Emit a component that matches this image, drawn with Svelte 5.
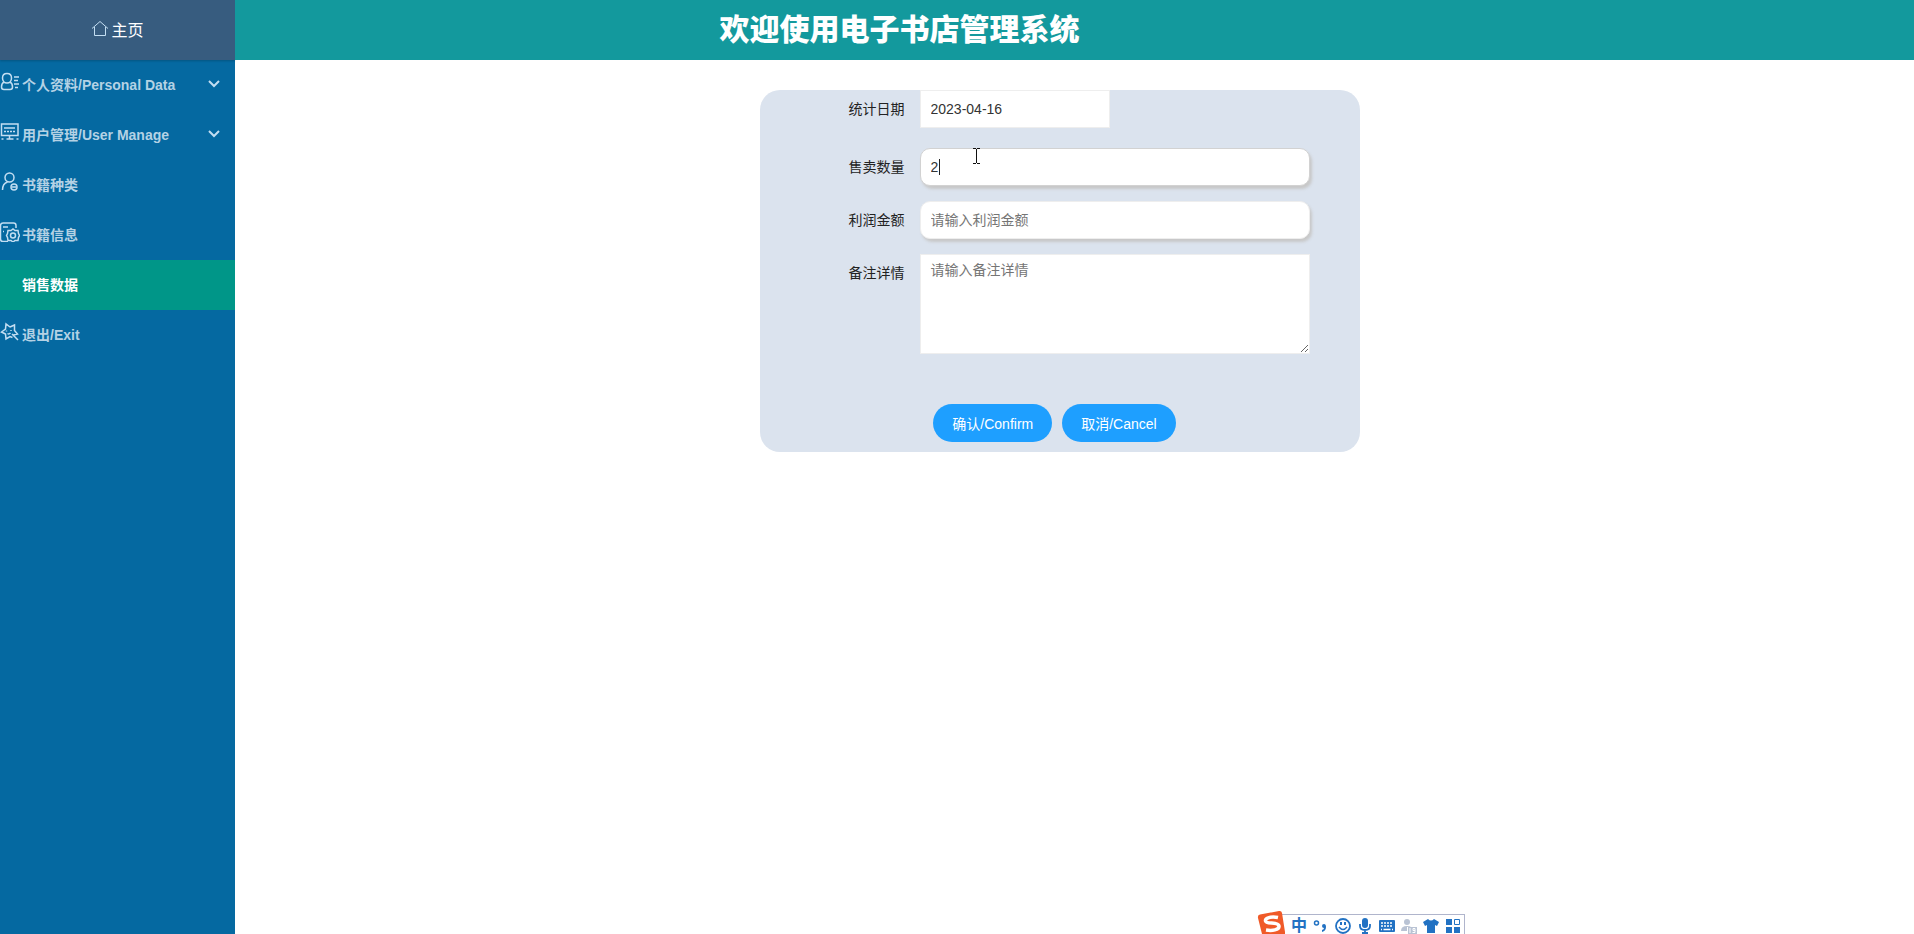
<script lang="ts">
	import { onMount } from 'svelte';

	type MenuItem = { label: string; icon: string; expandable?: boolean; active?: boolean };

	const menu: MenuItem[] = [
		{ label: '个人资料/Personal Data', icon: 'profile', expandable: true },
		{ label: '用户管理/User Manage', icon: 'screen', expandable: true },
		{ label: '书籍种类', icon: 'person' },
		{ label: '书籍信息', icon: 'settings' },
		{ label: '销售数据', icon: '', active: true },
		{ label: '退出/Exit', icon: 'star' }
	];

	let date = $state('2023-04-16');
	let quantity = $state('2');
	let profit = $state('');
	let remark = $state('');
	let quantityInput: HTMLInputElement;

	onMount(() => quantityInput.focus());

	function reset() {
		quantity = '';
		profit = '';
		remark = '';
	}
</script>

<div class="layout">
	<aside class="sidebar">
		<a class="home" href="#home">
			<svg class="home-icon" viewBox="0 0 18 18" aria-hidden="true">
				<path d="M1 8.500 9 1.500l8 7M3.500 7v8.500h11V7" />
			</svg>
			<span>主页</span>
		</a>
		<nav>
			{#each menu as item}
				<a class="item" class:active={item.active} href="#menu">
					<svg class="icon" viewBox="0 0 20 20" aria-hidden="true">
						{#if item.icon === 'profile'}
							<path d="M7 1.500c3 0 4.500 2 4.500 4.500S10 11 7 11 2.500 8.500 2.500 6 4 1.500 7 1.500z" />
							<path d="M4 10c-2 1-2.500 3-2.500 5 0 2 1 2.500 2.500 2.500h6c1.500 0 2.500-.5 2.500-2.500s-.5-4-2.500-5M14 5h5M14 8.500h4M14 12h5M15 15.500h3" />
						{:else if item.icon === 'screen'}
							<path d="M1.500 2h16.500v11.500h-16.500zM9.500 13.500v3.500M6.500 17h7" />
							<path d="M4 6h11M4 9.500h2M7 9.500h2M10 9.500h2M13 9.500h2M1.500 17h2M16.500 17h2" />
						{:else if item.icon === 'person'}
							<circle cx="9.5" cy="5.5" r="4.5" />
							<path d="M2.500 18c0-4 2-7 5-8" />
							<circle cx="14" cy="15" r="3" />
							<path d="M13 14v2M15 14v2" />
						{:else if item.icon === 'settings'}
							<path d="M16 6V3.500q0-2.500-2.500-2.500H3Q.5 1 .5 3.500V17q0 2.500 2.500 2.500h5M3 5h5M3 9.500h1" />
							<path d="m11 8.500 2-1.500 2 1.500h3l.5 3 1 2-1 2-.5 3h-3L13 20l-2-1.500H8l-.5-3-1-2 1-2 .5-3z" />
							<circle cx="13" cy="13.5" r="2.5" />
						{:else if item.icon === 'star'}
							<path d="M10 5 14.500 3v5.500l3 3.500-4 1M10 5 6 2 5.500 7 1.500 10l4 2 .5 5 4-2.500 2.500 1M12 12l6 6" />
							<path d="M6.500 8.500v1M11 8v1M7.500 11.500q1.500 1 3-.5" />
						{/if}
					</svg>
					<span class="item-label">{item.label}</span>
					{#if item.expandable}
						<svg class="chevron" viewBox="0 0 12 8" aria-hidden="true">
							<path d="m1 1 5 5 5-5" />
						</svg>
					{/if}
				</a>
			{/each}
		</nav>
	</aside>

	<div class="body">
		<header class="header">
			<h1>欢迎使用电子书店管理系统</h1>
		</header>
		<main class="main">
			<form class="panel" onsubmit={(e) => e.preventDefault()}>
				<div class="row row-date">
					<label for="date">统计日期</label>
					<input id="date" class="field short" type="text" bind:value={date} />
				</div>
				<div class="row">
					<label for="quantity">售卖数量</label>
					<div class="control">
						<input
							id="quantity"
							class="field raised"
							type="text"
							placeholder="请输入售卖数量"
							bind:value={quantity}
							bind:this={quantityInput}
						/>
						<span class="caret"></span>
						<svg class="pointer" viewBox="0 0 7 16" aria-hidden="true">
							<path d="M0 .5h3M4 .5h3M3.500 1v14M0 15.500h3M4 15.500h3" />
						</svg>
					</div>
				</div>
				<div class="row">
					<label for="profit">利润金额</label>
					<input id="profit" class="field raised" type="text" placeholder="请输入利润金额" bind:value={profit} />
				</div>
				<div class="row">
					<label for="remark">备注详情</label>
					<textarea id="remark" class="field" placeholder="请输入备注详情" bind:value={remark}></textarea>
				</div>
				<div class="buttons">
					<button type="submit">确认/Confirm</button>
					<button type="button" onclick={reset}>取消/Cancel</button>
				</div>
			</form>
		</main>
	</div>

	<div class="ime">
		<svg class="ime-logo" viewBox="0 0 28 24" aria-hidden="true">
			<path d="M3 4.500 22 1q2.500-.5 3 2L28 22v2H5L1 8q-.5-3 2-3.500z" fill="#f05a28" />
			<path d="M21 7.500C14 6 8 8 8.500 11c.5 3.500 13 .5 13.500 5 .5 4-7 5-13 4" fill="none" stroke="#fff" stroke-width="3.500" />
		</svg>
		<span class="ime-mode">中</span>
		<svg viewBox="0 0 16 16" aria-hidden="true">
			<circle cx="3.5" cy="5" r="2" fill="none" stroke="#2272c3" stroke-width="1.500" />
			<path d="M9 8q0-2 2-2t2 3q0 4-4 5v-2q2-.5 2-2-2 0-2-2z" />
		</svg>
		<svg viewBox="0 0 16 16" aria-hidden="true">
			<circle cx="8" cy="8" r="7" fill="none" stroke="#2272c3" stroke-width="1.800" />
			<path d="M5 4h2v3H5zM9 4h2v3H9z" />
			<path d="M4 9q4 5 8 0" fill="none" stroke="#2272c3" stroke-width="1.500" />
		</svg>
		<svg viewBox="0 0 16 16" aria-hidden="true">
			<rect x="5" y="0" width="6" height="10" rx="3" />
			<path d="M3 6v2q0 4 5 4t5-4V6M8 12v3M5 15h6" fill="none" stroke="#2272c3" stroke-width="1.800" />
		</svg>
		<svg viewBox="0 0 16 16" aria-hidden="true">
			<rect x="0" y="2" width="16" height="12" rx="1" />
			<path d="M2 5h12M2 8h12" stroke="#fff" stroke-width="1.500" stroke-dasharray="2 1" />
			<path d="M2 11.500h1M4.500 11.500h7M13 11.500h1" stroke="#fff" stroke-width="1.500" />
		</svg>
		<svg viewBox="0 0 16 16" aria-hidden="true">
			<g fill="#b9c3d4">
				<circle cx="6" cy="4" r="3" />
				<path d="M0 13q0-5 6-5 3 0 4 1H6v4zM7 9h9v7H7z" />
			</g>
			<path d="M9 10v5M14 12.500h-2v-2h2v4h-2.500" fill="none" stroke="#fff" />
		</svg>
		<svg viewBox="0 0 16 16" aria-hidden="true">
			<path d="M5 1q3 3 6 0l5 3-2 4-2-1v8H4V7L2 8 0 4z" />
		</svg>
		<svg viewBox="0 0 16 16" aria-hidden="true">
			<path d="M1 1h6v6H1zM1 9h6v6H1zM9 9h6v6H9z" />
			<path d="M9.500 1.500h5v5h-5z" fill="none" stroke="#2272c3" />
		</svg>
	</div>
</div>

<style>
	:global(body) {
		margin: 0;
		font-family: 'Liberation Sans', 'Noto Sans CJK SC', sans-serif;
		font-size: 14px;
		color: #222;
	}

	.layout {
		position: relative;
		display: flex;
		min-height: 100vh;
		overflow: hidden;
	}

	.sidebar {
		flex: none;
		width: 235px;
		background: #0569a1;
	}

	.home {
		display: flex;
		align-items: center;
		justify-content: center;
		gap: 2px;
		box-sizing: border-box;
		height: 60px;
		padding-bottom: 2px;
		background: #375c7f;
		box-shadow: 0 1px 2px rgba(0, 0, 0, 0.2);
		color: #fff;
		font-size: 16px;
		text-decoration: none;
	}

	.home-icon,
	.icon,
	.chevron {
		fill: none;
		stroke: #c3def2;
	}

	.home-icon {
		width: 18px;
		height: 18px;
	}

	.item {
		display: flex;
		align-items: center;
		box-sizing: border-box;
		height: 50px;
		padding: 0 15px 2px 0;
		color: #b4d2e5;
		font-weight: 700;
		text-decoration: none;
	}

	.item.active {
		background: #009688;
		color: #fff;
	}

	.icon {
		flex: none;
		width: 20px;
		height: 20px;
		margin: 0 2px 4px 0;
		stroke-width: 1.5;
	}

	.item-label {
		flex: 1;
	}

	.chevron {
		width: 12px;
		height: 8px;
		stroke-width: 2;
	}

	.body {
		flex: 1;
		min-width: 0;
	}

	.header {
		display: flex;
		align-items: center;
		justify-content: center;
		height: 60px;
		padding-right: 350px;
		background: #13999d;
	}

	h1 {
		margin: 0;
		color: #fff;
		font-size: 30px;
		font-weight: 900;
		line-height: 40px;
		white-space: nowrap;
	}

	.main {
		padding: 30px 30px 30px 0;
	}

	.panel {
		box-sizing: border-box;
		max-width: 600px;
		margin: 0 auto;
		padding: 0 50px 10px;
		border-radius: 20px;
		background: #dbe3ee;
	}

	.row {
		display: flex;
		align-items: flex-start;
		margin-bottom: 15px;
	}

	.row-date {
		margin-bottom: 20px;
	}

	label {
		flex: none;
		box-sizing: border-box;
		width: 110px;
		padding: 9px 15px;
		line-height: 20px;
		text-align: right;
	}

	.control {
		position: relative;
		flex: 1;
		display: flex;
	}

	.field {
		flex: 1;
		box-sizing: border-box;
		min-width: 0;
		height: 38px;
		padding: 0 10px;
		border: 1px solid #eee;
		outline: none;
		background: #fff;
		color: #333;
		font: inherit;
	}

	.field::placeholder {
		color: #757575;
	}

	.short {
		flex: 0 1 190px;
	}

	.raised {
		border-radius: 10px;
		box-shadow: 2px 3px 3px #c8c8c8;
	}

	.raised:focus {
		border-color: #d2d2d2;
	}

	#quantity {
		caret-color: transparent;
	}

	textarea.field {
		height: 100px;
		padding: 5px 10px;
		line-height: 20px;
		resize: vertical;
	}

	.caret {
		position: absolute;
		top: 11px;
		left: 19px;
		width: 1px;
		height: 16px;
		background: #222;
	}

	.pointer {
		position: absolute;
		top: 0;
		left: 53px;
		width: 7px;
		height: 16px;
		fill: none;
		stroke: #111;
		pointer-events: none;
	}

	.buttons {
		display: flex;
		justify-content: center;
		gap: 10px;
		margin-top: 50px;
		padding-right: 10px;
	}

	button {
		height: 38px;
		padding: 0 19px;
		border: 0;
		border-radius: 19px;
		background: #1e9fff;
		color: #fff;
		font: inherit;
		white-space: nowrap;
		cursor: pointer;
	}

	/* input method toolbar docked to the bottom edge */
	.ime {
		position: absolute;
		right: 449px;
		bottom: 0;
		display: flex;
		align-items: flex-end;
		gap: 6px;
		height: 19px;
		padding: 0 3px 0 20px;
		border: 1px solid #b0b5cc;
		border-bottom: 0;
		background: #fff;
	}

	.ime svg {
		width: 16px;
		height: 16px;
		fill: #2272c3;
	}

	.ime .ime-logo {
		position: absolute;
		bottom: 0;
		left: -14px;
		width: 28px;
		height: 24px;
	}

	.ime-mode {
		width: 16px;
		color: #2272c3;
		font-size: 16px;
		font-weight: 700;
		line-height: 16px;
	}
</style>
